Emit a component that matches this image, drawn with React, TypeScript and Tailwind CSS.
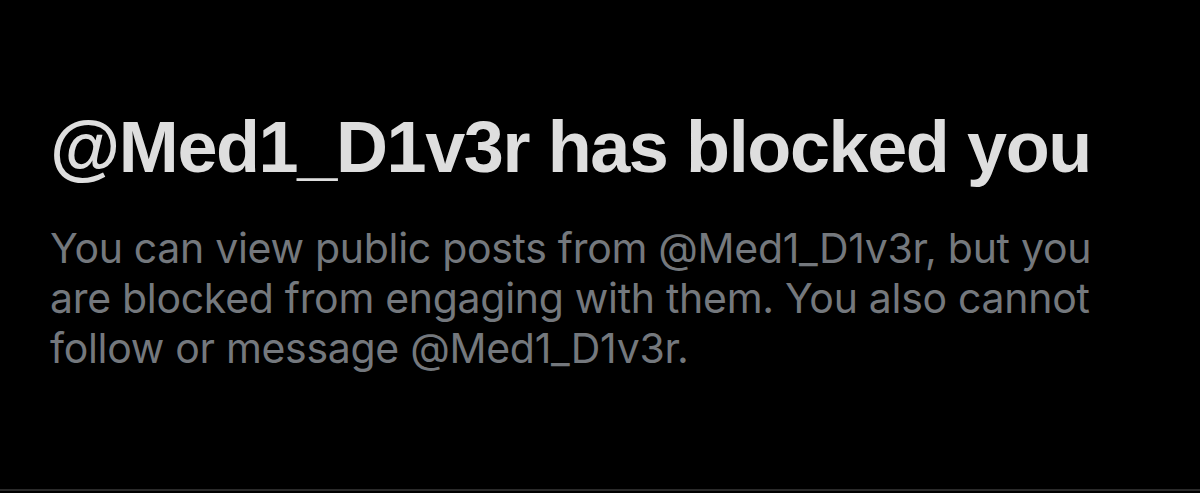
export default function App() {
  return (
    <div className="w-[1200px] h-[493px] bg-black flex flex-col overflow-hidden">
      <div className="flex-1 flex flex-col pl-[50px] pt-[107px]">
        <h1
          className="text-[72px] leading-[80px] font-bold text-[#dedede] tracking-[-1.4px]"
          style={{ fontFamily: '"Liberation Sans", Arial, sans-serif' }}
        >
          @Med1_D1v3r has blocked you
        </h1>
        <p
          className="mt-[36px] w-[1070px] text-[41px] leading-[50px] text-[#74787d] tracking-[-0.3px]"
          style={{ fontFamily: 'Inter, sans-serif' }}
        >
          You can view public posts from @Med1_D1v3r, but you are blocked from engaging with them. You also cannot follow or message @Med1_D1v3r.
        </p>
      </div>
      <div className="h-[2px] mb-[2px] bg-[#2a2a2a]" />
    </div>
  );
}
